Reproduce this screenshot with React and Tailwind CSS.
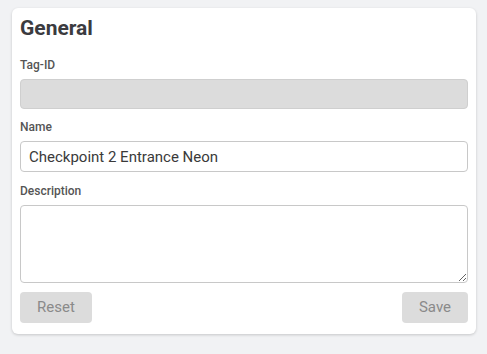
import React from 'react';

const Label = ({ children }) => (
  <label className="block text-[12px] font-medium text-[#555] leading-[14px] mb-[7px]">{children}</label>
);

export default function App() {
  return (
    <div className="min-h-screen bg-[#f1f2f4] pt-2 px-3 font-['Roboto',sans-serif]">
      <div className="w-[464px] h-[326px] bg-white rounded-md shadow-[0_1px_3px_rgba(0,0,0,0.18)] px-2 pt-[6px]">
        <h2 className="text-[21px] font-bold text-[#3b3b3f] leading-[28px] mb-[16px]">General</h2>

        <Label>Tag-ID</Label>
        <div className="h-[30px] rounded border border-[#cfcfcf] bg-[#dcdcdc] mb-[11px]" />

        <Label>Name</Label>
        <input
          readOnly
          value="Checkpoint 2 Entrance Neon"
          className="block w-full h-[31px] rounded border border-[#c8c8c8] bg-white px-2 text-[15px] text-[#3a3a3a] outline-none mb-[12px]"
        />

        <Label>Description</Label>
        <textarea className="block w-full h-[78px] rounded border border-[#c8c8c8] bg-white outline-none" />

        <div className="flex justify-between mt-[9px]">
          <button className="h-[31px] w-[72px] rounded bg-[#dcdcdc] text-[15px] text-[#8a8a8a]">Reset</button>
          <button className="h-[31px] w-[66px] rounded bg-[#dcdcdc] text-[15px] text-[#8a8a8a]">Save</button>
        </div>
      </div>
    </div>
  );
}
